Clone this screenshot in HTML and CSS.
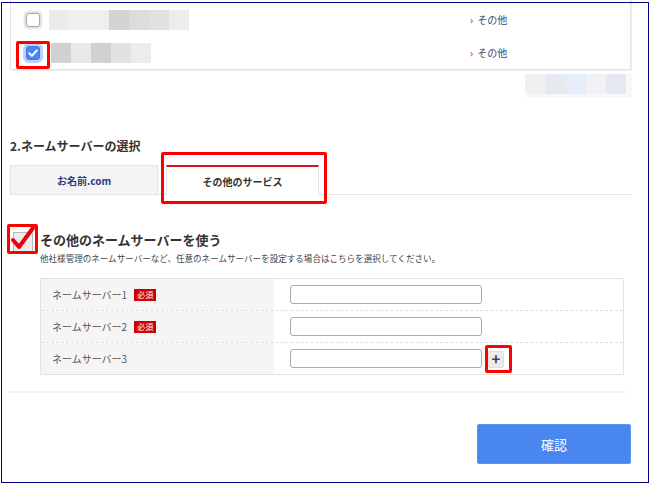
FILE: index.html
```html
<!DOCTYPE html>
<html lang="ja">
<head>
<meta charset="utf-8">
<title>ネームサーバーの選択</title>
<link rel="stylesheet" href="styles.css">
</head>
<body>
<div class="page">
  <div class="panel">
    <div class="prow">
      <span class="cb"></span>
      <div class="pname"><div class="blur blur1"></div></div>
      <a class="plink"><span class="chev">›</span>その他</a>
    </div>
    <div class="prow">
      <span class="cb-wrap">
        <span class="cb cb-on"><svg viewBox="0 0 14 14" width="14" height="14"><path d="M3.2 7.2 L5.9 9.8 L10.8 4.4" fill="none" stroke="#fff" stroke-width="2" stroke-linecap="round" stroke-linejoin="round"/></svg></span>
        <span class="mark mark-cb"></span>
      </span>
      <div class="pname"><div class="blur blur2"></div></div>
      <a class="plink"><span class="chev">›</span>その他</a>
    </div>
  </div>
  <div class="after-panel"><div class="blur blur3"></div></div>

  <h2 class="heading">2.ネームサーバーの選択</h2>

  <div class="tabs">
    <div class="tab">お名前.com</div>
    <div class="tab tab-active">その他のサービス<span class="mark mark-tab"></span></div>
  </div>

  <div class="use">
    <span class="bigcb-wrap">
      <span class="bigcb"></span>
      <svg class="bigcheck" viewBox="0 0 30 30" width="30" height="30"><path d="M5 17 L11 24 L25 5" fill="none" stroke="#e8000b" stroke-width="4" stroke-linecap="round" stroke-linejoin="round"/></svg>
      <span class="mark mark-big"></span>
    </span>
    <div class="use-text">
      <div class="use-title">その他のネームサーバーを使う</div>
      <div class="use-sub">他社様管理のネームサーバーなど、任意のネームサーバーを設定する場合はこちらを選択してください。</div>
    </div>
  </div>

  <div class="ns-table">
    <div class="ns-row">
      <div class="ns-label">ネームサーバー1<span class="req">必須</span></div>
      <div class="ns-field"><input class="ns-input" type="text"></div>
    </div>
    <div class="ns-row">
      <div class="ns-label">ネームサーバー2<span class="req">必須</span></div>
      <div class="ns-field"><input class="ns-input" type="text"></div>
    </div>
    <div class="ns-row ns-last">
      <div class="ns-label">ネームサーバー3</div>
      <div class="ns-field"><input class="ns-input" type="text"><span class="plus">+<span class="mark mark-plus"></span></span></div>
    </div>
  </div>

  <div class="divider"></div>

  <div class="actions"><button class="confirm">確認</button></div>
</div>
<div class="frame"></div>
</body>
</html>
```

FILE: styles.css
```css
* { box-sizing: border-box; }
html, body { margin: 0; padding: 0; }
body {
  width: 650px;
  height: 485px;
  overflow: hidden;
  background: #fff;
  font-family: "Noto Sans CJK JP", "Noto Sans", sans-serif;
  color: #333;
  position: relative;
}
.page { padding: 0 19px 0 10px; }

.frame {
  position: absolute;
  left: 1px; top: 2px;
  width: 648px; height: 481px;
  border: 1px solid #00007f;
  pointer-events: none;
}

.mark {
  position: absolute;
  border: 3px solid #f00;
  border-radius: 2px;
  pointer-events: none;
}

/* top panel */
.panel {
  margin-top: -4px;
  border: 1px solid #e4e4e4;
  box-shadow: 1px 1px 0 #f0f0f0;
  padding-top: 6px;
}
.prow {
  height: 33px;
  display: flex;
  align-items: center;
  padding-left: 15px;
}
.cb {
  width: 14px; height: 14px;
  border: 1px solid #a8a8a8;
  border-radius: 3px;
  background: #fff;
  box-shadow: 0 0 2px 2px #dedede;
  flex: none;
  display: block;
}
.cb-wrap { position: relative; display: block; flex: none; }
.cb-on {
  background: #4a86ef;
  border-color: #3f7be6;
  box-shadow: 0 0 0 3px #bcd3f7;
}
.cb-on svg { display: block; margin: -1px; }
.mark-cb { left: -10px; top: -5px; width: 34px; height: 28px; }
.pname { flex: 0 0 430px; padding-left: 9px; }
.prow .cb-wrap + .pname { padding-left: 11px; }
.plink {
  font-size: 10px;
  color: #3a4a7a;
  display: flex;
  align-items: center;
}
.chev { color: #e53a3a; font-size: 10px; margin-right: 4px; font-weight: 700; }

.blur { height: 20px; }
.blur1 {
  width: 140px;
  background: linear-gradient(to right, #ebebeb 0 20px, #efefef 20px 60px, #d3d3d3 60px 80px, #dcdcdc 80px 100px, #e1e1e1 100px 120px, #ececec 120px 140px);
}
.blur2 {
  width: 100px;
  background: linear-gradient(to right, #d1d1d1 0 20px, #e9e9e9 20px 40px, #d1d1d1 40px 60px, #e2e2e2 60px 80px, #ececec 80px 100px);
}
.after-panel {
  display: flex;
  justify-content: flex-end;
  margin-top: 4px;
  margin-right: -1px;
}
.blur3 {
  width: 107px;
  height: 23px;
  background:
    linear-gradient(to right, #f0f0f0 0 21px, #e6e9f0 21px 41px, #e5edfb 41px 61px, #f1f2f5 61px 81px, #e5e8f1 81px 101px, transparent 101px) top left / 100% 20px no-repeat,
    #f8f8f9;
}

/* heading */
.heading {
  margin: 41px 0 0;
  font-size: 12px;
  line-height: 16px;
  font-weight: 700;
  color: #333;
}

/* tabs */
.tabs {
  margin-top: 11px;
  display: flex;
  gap: 8px;
  border-bottom: 1px solid #e5e5e5;
  align-items: flex-start;
}
.tab {
  width: 148px;
  height: 29px;
  border: 1px solid #e5e5e5;
  border-bottom: none;
  background: #f4f4f4;
  font-size: 10px;
  font-weight: 700;
  color: #253f7e;
  display: flex;
  align-items: center;
  justify-content: center;
  position: relative;
}
.tab-active {
  width: 153px;
  height: 30px;
  margin-bottom: -1px;
  background: #fff;
  border-top: 2px solid #d9141b;
  color: #333;
  padding-top: 1px;
}
.mark-tab { left: -6px; top: -15px; right: -9px; bottom: -9px; }

/* use other ns */
.use {
  margin-top: 36px;
  display: flex;
  align-items: flex-start;
}
.bigcb-wrap {
  position: relative;
  flex: none;
  width: 30px;
  height: 18px;
}
.bigcb {
  position: absolute;
  left: 3px; top: 1px;
  width: 20px; height: 20px;
  border: 1px solid #b8b8b8;
  background: #ececec;
}
.bigcheck { position: absolute; left: -2px; top: -8px; }
.mark-big { left: -3px; top: -7px; width: 31px; height: 30px; }
.use-title {
  font-size: 13px;
  line-height: 18px;
  font-weight: 700;
  color: #333;
}
.use-sub {
  margin-top: 3px;
  font-size: 8.55px;
  line-height: 12px;
  color: #444;
  white-space: nowrap;
}

/* table */
.ns-table {
  margin: 14px 7px 0 30px;
  border: 1px solid #e3e3e3;
}
.ns-row {
  display: flex;
  height: 32px;
  border-bottom: 1px dashed #e0e0e0;
}
.ns-row.ns-last { border-bottom: none; height: 31px; }
.ns-label {
  flex: 0 0 233px;
  background: #f5f5f5;
  padding-left: 11px;
  font-size: 10px;
  color: #555;
  display: flex;
  align-items: center;
}
.req {
  margin-left: 7px;
  background: #cc000b;
  color: #fff;
  font-size: 8px;
  line-height: 12px;
  padding: 0 3px;
}
.ns-field {
  flex: 1;
  padding-left: 16px;
  display: flex;
  align-items: center;
}
.ns-input {
  width: 192px;
  height: 19px;
  border: 1px solid #ababab;
  border-radius: 3px;
  padding: 0;
  margin: 0;
  background: #fff;
}
.plus {
  position: relative;
  margin-left: 6px;
  width: 16px;
  height: 17px;
  background: #ececec;
  border: 1px solid #dedede;
  border-radius: 2px;
  font-size: 15px;
  font-weight: 700;
  line-height: 14px;
  color: #444;
  text-align: center;
  margin-top: 1px;
}
.mark-plus { left: -4px; top: -7px; right: -9px; bottom: -6px; }

.divider {
  margin: 16px 6px 0 0;
  height: 2px;
  background: #f1f1f1;
}
.actions {
  margin-top: 31px;
  display: flex;
  justify-content: flex-end;
}
.confirm {
  width: 154px;
  height: 40px;
  background: #4a86ef;
  border: 1px solid #5d93f1;
  border-radius: 2px;
  color: #fff;
  font-family: "Noto Sans CJK JP", "Noto Sans", sans-serif;
  font-size: 13px;
  padding: 0;
}
```
